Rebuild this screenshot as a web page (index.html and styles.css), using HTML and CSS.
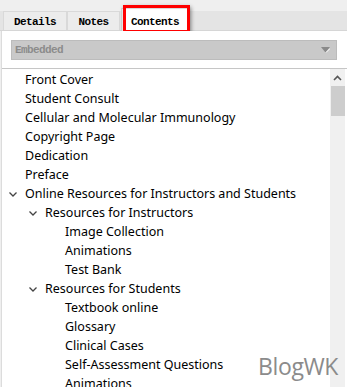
FILE: index.html
```html
<!DOCTYPE html>
<html>
<head>
<meta charset="utf-8">
<link rel="stylesheet" href="styles.css">
</head>
<body>
<div class="window">
  <div class="tabbar">
    <div class="tab">Details</div>
    <div class="tab">Notes</div>
    <div class="tab active">Contents<span class="mark"></span></div>
  </div>
  <div class="panel">
    <div class="dropdown">
      <span class="dd-text">Embedded</span>
      <svg class="dd-arrow" width="9" height="6" viewBox="0 0 9 6"><path d="M0 0h9L4.5 5.5z" fill="#8a8a8a"/><path d="M5 5.5L9 1.5" stroke="#fff" stroke-width="1"/></svg>
    </div>
    <div class="content">
      <ul class="tree">
        <li class="row l0">Front Cover</li>
        <li class="row l0">Student Consult</li>
        <li class="row l0">Cellular and Molecular Immunology</li>
        <li class="row l0">Copyright Page</li>
        <li class="row l0">Dedication</li>
        <li class="row l0">Preface</li>
        <li class="row l0"><svg class="chev" width="8" height="5" viewBox="0 0 8 5"><path d="M0.5 0.5L4 4L7.5 0.5" fill="none" stroke="#444" stroke-width="1.3"/></svg>Online Resources for Instructors and Students</li>
        <li class="row l1"><svg class="chev" width="8" height="5" viewBox="0 0 8 5"><path d="M0.5 0.5L4 4L7.5 0.5" fill="none" stroke="#444" stroke-width="1.3"/></svg>Resources for Instructors</li>
        <li class="row l2">Image Collection</li>
        <li class="row l2">Animations</li>
        <li class="row l2">Test Bank</li>
        <li class="row l1"><svg class="chev" width="8" height="5" viewBox="0 0 8 5"><path d="M0.5 0.5L4 4L7.5 0.5" fill="none" stroke="#444" stroke-width="1.3"/></svg>Resources for Students</li>
        <li class="row l2">Textbook online</li>
        <li class="row l2">Glossary</li>
        <li class="row l2">Clinical Cases</li>
        <li class="row l2">Self-Assessment Questions</li>
        <li class="row l2">Animations</li>
      </ul>
      <div class="scrollbar">
        <svg class="up" width="9" height="6" viewBox="0 0 9 6"><path d="M1 5L4.5 1.5L8 5" fill="none" stroke="#555" stroke-width="1.6"/></svg>
        <div class="thumb"></div>
      </div>
    </div>
    <div class="watermark">BlogWK</div>
  </div>
</div>
</body>
</html>
```
FILE: styles.css
```css
html, body {
  margin: 0;
  padding: 0;
}
body {
  width: 347px;
  height: 387px;
  overflow: hidden;
  background: #efefef;
}
.window {
  height: 387px;
  display: flex;
  flex-direction: column;
}
.tabbar {
  height: 31px;
  box-sizing: border-box;
  display: flex;
  align-items: flex-end;
  padding-left: 3px;
  background: linear-gradient(#efefef 0 11px, #e4e4e4 11px);
  border-bottom: 1px solid #d6d6d6;
}
.tab {
  position: relative;
  height: 19px;
  box-sizing: border-box;
  border: 1px solid #d9d9d9;
  border-bottom: none;
  background: #ececec;
  font-family: "Liberation Mono", "Courier New", monospace;
  font-size: 11px;
  font-weight: bold;
  letter-spacing: -0.6px;
  color: #000;
  line-height: 21px;
  text-align: center;
}
.tab:nth-child(1) { width: 64px; }
.tab:nth-child(2) { width: 53px; }
.tab.active {
  width: 68px;
  height: 23px;
  margin-left: 1px;
  margin-bottom: -1px;
  background: #fff;
  line-height: 27px;
}
.mark {
  position: absolute;
  left: 1px;
  top: -4px;
  width: 61px;
  height: 22px;
  border: 3px solid #ff0000;
  box-shadow: 1px 2px 4px rgba(0,0,0,0.45);
}
.panel {
  position: relative;
  flex: 1;
  margin-left: 1px;
  background: #fff;
  border-left: 1px solid #dcdcdc;
  display: flex;
  flex-direction: column;
  min-height: 0;
}
.dropdown {
  margin: 9px 10px 0 9px;
  height: 20px;
  box-sizing: border-box;
  border: 1px solid #bcbcbc;
  background: #c9c9c9;
  display: flex;
  align-items: center;
  justify-content: space-between;
  padding: 0 6px 0 3px;
}
.dd-text {
  font-family: "Liberation Mono", "Courier New", monospace;
  font-size: 11px;
  font-weight: bold;
  letter-spacing: -0.6px;
  color: #8c8c8c;
}
.dd-arrow { display: block; }
.content {
  margin-top: 8px;
  border-top: 1px solid #c6c6c6;
  flex: 1;
  min-height: 0;
  display: flex;
}
.tree {
  flex: 1;
  list-style: none;
  margin: 0;
  padding: 1px 0 0 0;
  font-family: "Noto Sans", sans-serif;
  font-size: 12.5px;
  color: #000;
}
.row {
  height: 19px;
  line-height: 20px;
  white-space: nowrap;
  position: relative;
}
.l0 { padding-left: 23px; }
.l1 { padding-left: 43px; }
.l2 { padding-left: 63px; }
.chev {
  position: absolute;
  top: 8px;
}
.l0 .chev { left: 7px; }
.l1 .chev { left: 27px; }
.scrollbar {
  width: 15px;
  margin-right: 2px;
  background: #f0f0f0;
  display: flex;
  flex-direction: column;
  align-items: center;
}
.up {
  margin-top: 6px;
  display: block;
}
.thumb {
  margin-top: 5px;
  width: 14px;
  height: 30px;
  background: #cdcdcd;
}
.watermark {
  position: absolute;
  right: 9px;
  bottom: 5px;
  font-family: "Open Sans", sans-serif;
  font-size: 23px;
  color: #8b8b8b;
  letter-spacing: -0.4px;
}
```
